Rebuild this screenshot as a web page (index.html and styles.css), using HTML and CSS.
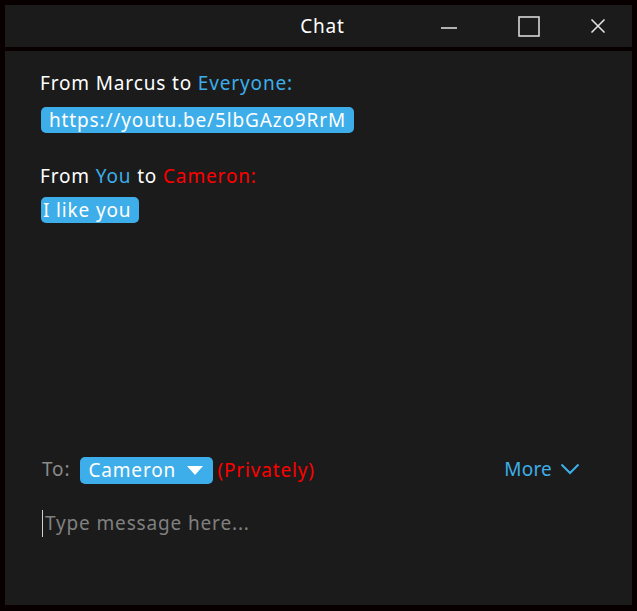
FILE: index.html
```html
<!DOCTYPE html>
<html>
<head>
<meta charset="utf-8">
<link rel="stylesheet" href="styles.css">
</head>
<body>
<div class="window">
  <div class="titlebar">
    <div class="title">Chat</div>
    <div class="controls">
      <span class="ctl min"><svg width="18" height="4" viewBox="0 0 18 4"><line x1="1" y1="2" x2="17" y2="2" stroke="#e6e6e6" stroke-width="1.5"/></svg></span>
      <span class="ctl max"><svg width="22" height="21" viewBox="0 0 22 21"><rect x="1" y="1" width="20" height="19" fill="none" stroke="#d8d8d8" stroke-width="1.6"/></svg></span>
      <span class="ctl close"><svg width="16" height="14" viewBox="0 0 16 14"><path d="M1.5 0.5 L14.5 13.5 M14.5 0.5 L1.5 13.5" stroke="#e6e6e6" stroke-width="1.5"/></svg></span>
    </div>
  </div>
  <div class="body">
    <div class="messages">
      <div class="msg">
        <div class="header">From Marcus to <span class="blue">Everyone:</span></div>
        <div class="bubble">https://youtu.be/5lbGAzo9RrM</div>
      </div>
      <div class="msg">
        <div class="header">From <span class="blue">You</span> to <span class="red">Cameron:</span></div>
        <div class="bubble">I like you</div>
      </div>
    </div>
    <div class="composer">
      <div class="to-row">
        <span class="to-label">To:</span>
        <span class="dropdown">Cameron<svg class="caret-down" width="16" height="9" viewBox="0 0 16 9"><path d="M0 0 H16 L8 9 Z" fill="#fff"/></svg></span>
        <span class="red private">(Privately)</span>
        <span class="more">More<svg width="20" height="12" viewBox="0 0 20 12"><path d="M1.5 1.5 L10 10 L18.5 1.5" fill="none" stroke="#3daee9" stroke-width="2"/></svg></span>
      </div>
      <div class="input"><span class="cursor"></span><span class="placeholder">Type message here...</span></div>
    </div>
  </div>
</div>
</body>
</html>
```
FILE: styles.css
```css
html, body {
  margin: 0;
  padding: 0;
  background: #080000;
}
body {
  width: 637px;
  height: 611px;
  font-family: "Noto Sans", "Open Sans", sans-serif;
  color: #ffffff;
  letter-spacing: 0.85px;
}
.window {
  box-sizing: border-box;
  width: 637px;
  height: 611px;
  padding: 5px 5px 6px 5px;
  display: flex;
  flex-direction: column;
  gap: 4px;
}
.titlebar {
  height: 42px;
  background: #1b1b1b;
  display: flex;
  align-items: center;
  position: relative;
}
.title {
  position: absolute;
  left: 0;
  right: 0;
  text-align: center;
  font-size: 19px;
  padding-left: 8px;
  top: 8px;
}
.controls {
  margin-left: auto;
  display: flex;
  align-items: center;
}
.ctl { display: flex; align-items: center; }
.min { margin-right: 60px; margin-top: 4px; }
.max { margin-right: 50px; }
.close { margin-right: 26px; }
.body {
  flex: 1;
  background: #1b1b1b;
  display: flex;
  flex-direction: column;
  padding: 0 0 0 35px;
}
.messages {
  flex: 1;
  padding-top: 20px;
}
.msg { margin-bottom: 31px; }
.header {
  font-size: 19px;
  line-height: 24px;
  height: 24px;
}
.blue { color: #3daee9; }
.red { color: #ff0000; }
.bubble {
  display: inline-block;
  background: #3daee9;
  color: #fff;
  font-size: 19px;
  line-height: 26px;
  padding: 0 8px;
  border-radius: 5px;
  margin-top: 12px;
  margin-left: 1px;
}
.msg + .msg .bubble { margin-top: 9px; padding: 0 8px 0 2px; }
.composer {
  padding-bottom: 68px;
}
.to-row {
  display: flex;
  align-items: center;
  height: 28px;
  padding-right: 52px;
  font-size: 19px;
}
.to-label {
  color: #8a8a8a;
  margin-left: 2px;
  margin-right: 10px;
  margin-top: -2px;
}
.dropdown {
  background: #3daee9;
  border-radius: 5px;
  height: 27px;
  width: 133px;
  box-sizing: border-box;
  padding: 0 10px 0 8px;
  display: flex;
  align-items: center;
  justify-content: space-between;
}
.private { margin-left: 4px; }
.more {
  margin-left: auto;
  color: #3daee9;
  letter-spacing: 0.2px;
  display: flex;
  align-items: center;
  gap: 8px;
  margin-top: -2px;
}
.input {
  margin-top: 25px;
  height: 28px;
  display: flex;
  align-items: center;
  font-size: 19px;
}
.cursor {
  width: 1px;
  height: 27px;
  background: #d0d0d0;
  margin-left: 2px;
}
.placeholder {
  color: #808080;
  margin-left: 2px;
}
```
